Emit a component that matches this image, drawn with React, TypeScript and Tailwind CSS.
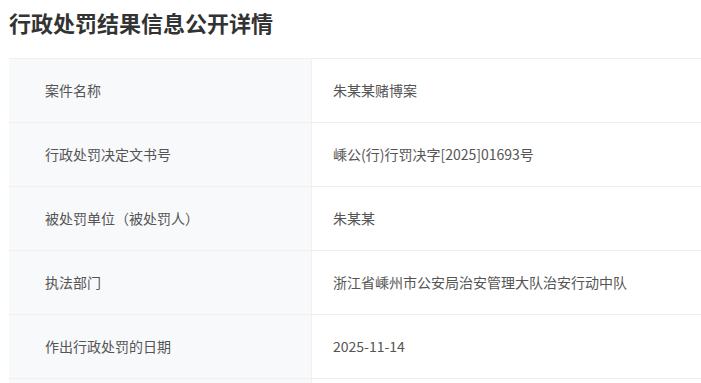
import React from "react";

const rows: [string, string][] = [
  ["案件名称", "朱某某赌博案"],
  ["行政处罚决定文书号", "嵊公(行)行罚决字[2025]01693号"],
  ["被处罚单位（被处罚人）", "朱某某"],
  ["执法部门", "浙江省嵊州市公安局治安管理大队治安行动中队"],
  ["作出行政处罚的日期", "2025-11-14"],
  ["", ""],
];

export default function App() {
  return (
    <div
      className="w-[701px] h-[383px] overflow-hidden bg-white"
      style={{ fontFamily: '"Noto Sans CJK SC", "Noto Sans", sans-serif' }}
    >
      <h1 className="pl-[9px] pt-[7px] text-[22px] leading-[30px] font-bold text-[#333333]">
        行政处罚结果信息公开详情
      </h1>
      <div className="ml-[9px] mt-[21px] w-[720px] border-t border-[#f0f0f0]">
        {rows.map(([k, v], i) => (
          <div key={i} className="flex h-[64px] border-b border-[#f0f0f0]">
            <div className="w-[303px] shrink-0 bg-[#f8f9fb] border-r border-[#f0f0f0] flex items-center pl-[36px] text-[14px] text-[#555555]">
              {k}
            </div>
            <div className="flex-1 flex items-center pl-[21px] text-[14px] text-[#555555]">
              {v}
            </div>
          </div>
        ))}
      </div>
    </div>
  );
}
